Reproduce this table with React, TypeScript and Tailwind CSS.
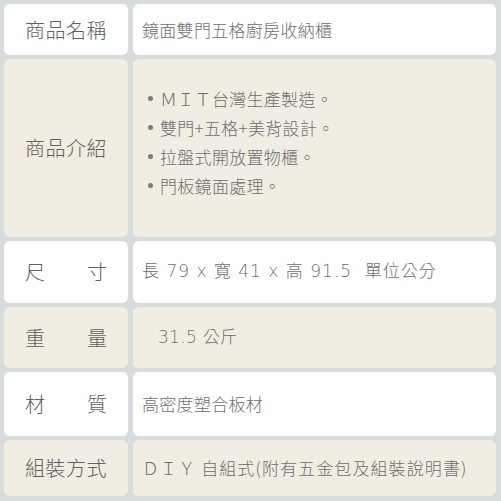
const font = { fontFamily: '"Noto Sans CJK TC", "Noto Sans", sans-serif' };
const latin = { fontFamily: '"DejaVu Sans", "Noto Sans CJK TC", sans-serif' };

type Row = { label: string[]; beige: boolean; value: React.ReactNode };

const bullets = ["ＭＩＴ台灣生產製造。", "雙門+五格+美背設計。", "拉盤式開放置物櫃。", "門板鏡面處理。"];

const rows: Row[] = [
  { label: ["商品名稱"], beige: false, value: <span>鏡面雙門五格廚房收納櫃</span> },
  {
    label: ["商品介紹"],
    beige: true,
    value: (
      <ul className="pl-[6px] pb-[12px] leading-[29px]">
        {bullets.map((b) => (
          <li key={b} className="flex items-center">
            <span className="mr-[7px] w-[5px] h-[5px] rounded-full bg-[#7a7a7a]" />
            <span>{b}</span>
          </li>
        ))}
      </ul>
    ),
  },
  {
    label: ["尺", "寸"],
    beige: false,
    value: (
      <span className="whitespace-pre tracking-[1px] font-extralight" style={latin}>
        長 79 x 寬 41 x 高 91.5  單位公分
      </span>
    ),
  },
  {
    label: ["重", "量"],
    beige: true,
    value: (
      <span className="pl-[16px] font-extralight" style={latin}>
        31.5 公斤
      </span>
    ),
  },
  { label: ["材", "質"], beige: false, value: <span>高密度塑合板材</span> },
  { label: ["組裝方式"], beige: true, value: <span className="tracking-[1.1px]">ＤＩＹ 自組式(附有五金包及組裝說明書)</span> },
];

export default function App() {
  return (
    <div className="w-[501px] h-[501px] bg-[#d9dcdc] pt-[4px] pl-[4px] pr-[5px] pb-[5px]" style={font}>
      <div className="grid h-full grid-cols-[124px_1fr] grid-rows-[51px_178px_62px_61px_64px_56px] gap-x-[5px] gap-y-[4px] text-[#6e6e6e]">
        {rows.map((r, i) => {
          const bg = r.beige ? "bg-[#f1ede3]" : "bg-white";
          return [
            <div key={`l${i}`} className={`${bg} rounded-[6px] flex items-center px-[21px] text-[20px] font-light text-[#606060]`}>
              {r.label.length > 1 ? (
                <div className="flex w-full justify-between">
                  {r.label.map((c) => (
                    <span key={c}>{c}</span>
                  ))}
                </div>
              ) : (
                <span className="tracking-[0.5px]">{r.label[0]}</span>
              )}
            </div>,
            <div key={`v${i}`} className={`${bg} rounded-[6px] flex items-center pl-[9px] text-[17px] tracking-[0.3px] font-light`}>
              {r.value}
            </div>,
          ];
        })}
      </div>
    </div>
  );
}
